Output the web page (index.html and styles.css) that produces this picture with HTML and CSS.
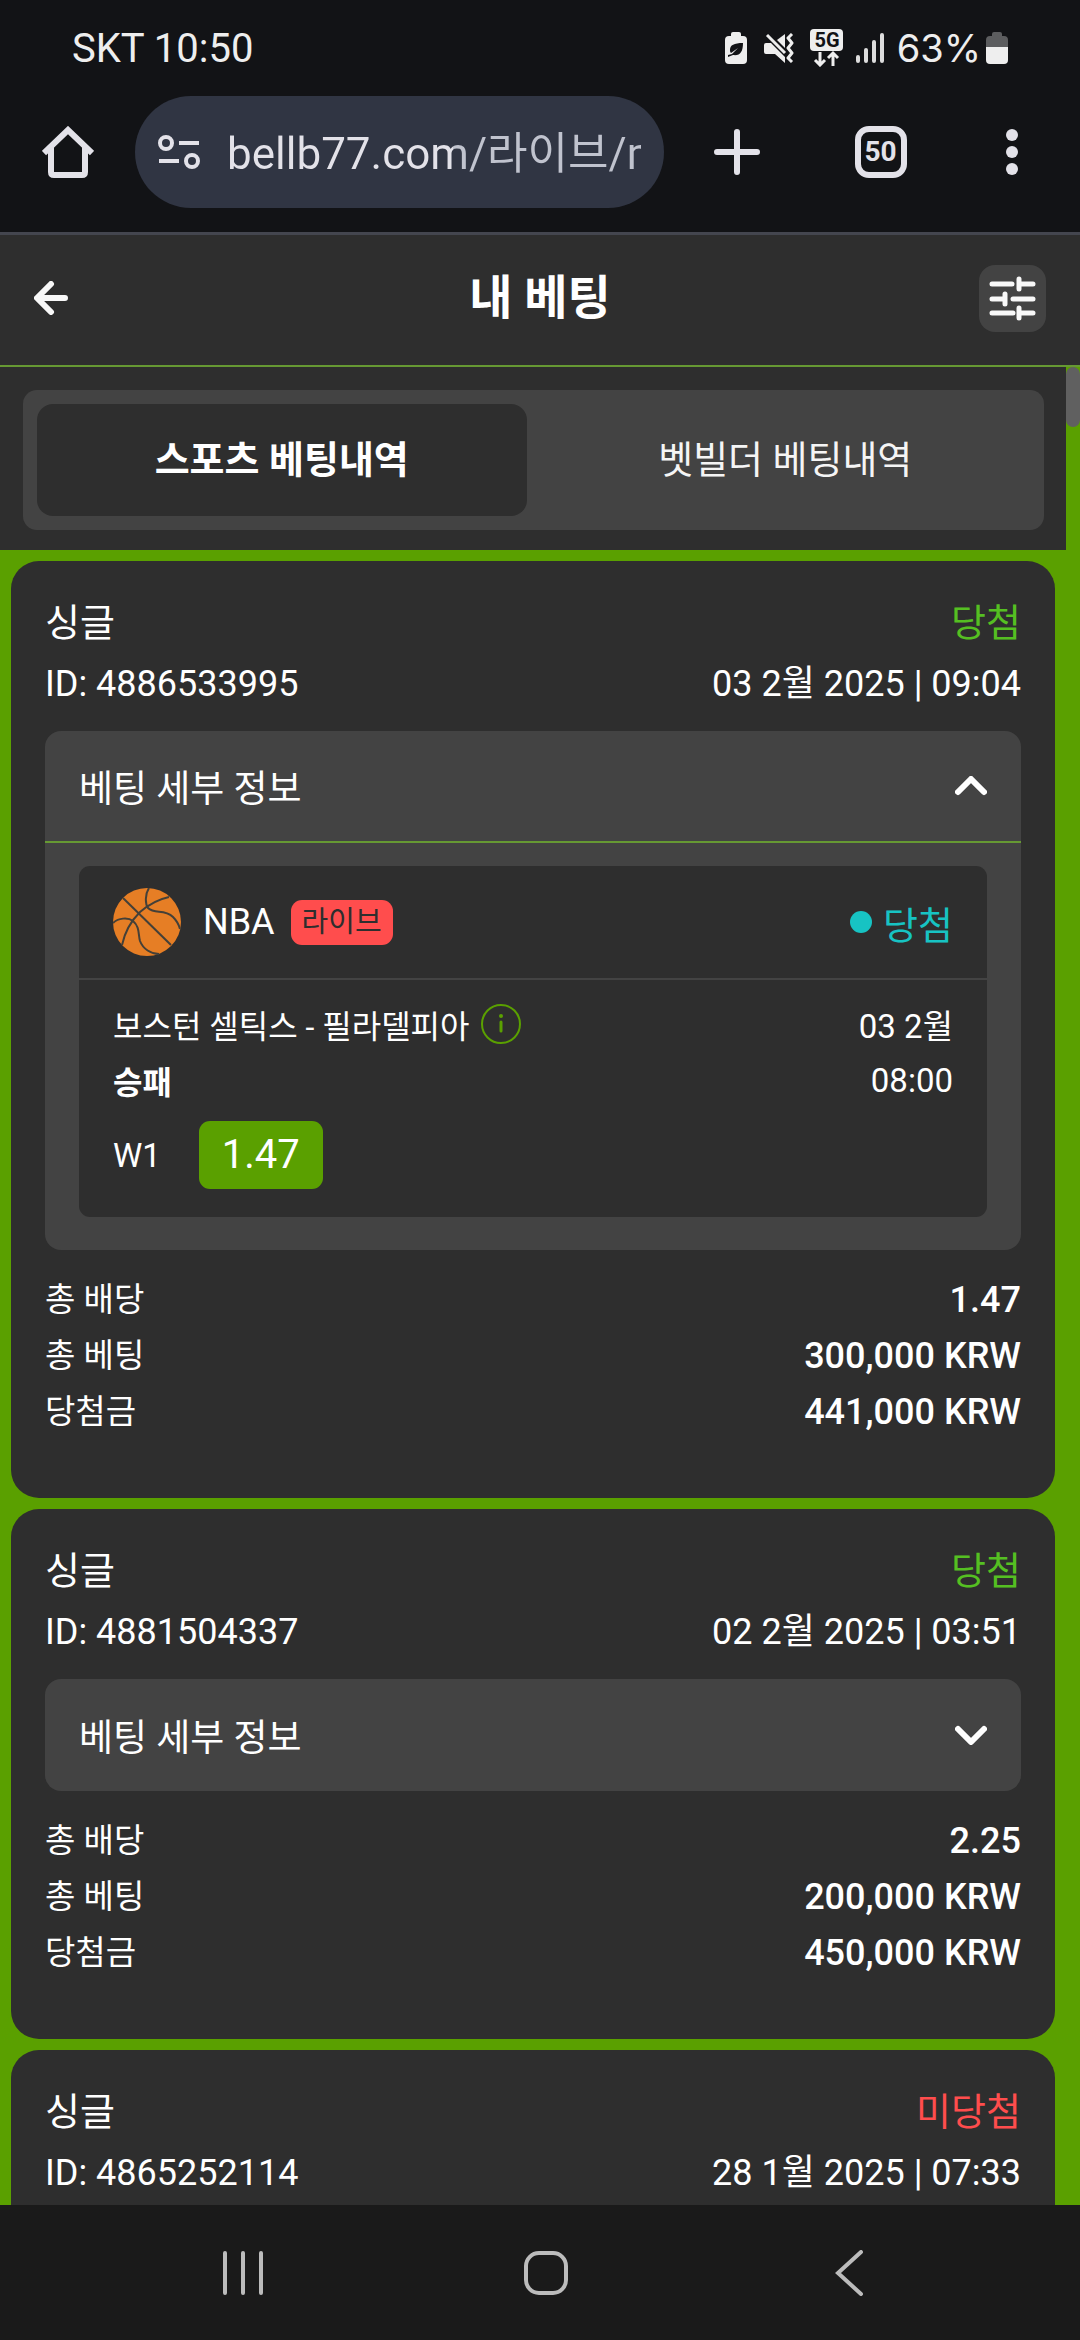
FILE: index.html
```html
<!DOCTYPE html>
<html lang="ko">
<head>
    <meta charset="UTF-8">
    <meta name="viewport" content="width=device-width, initial-scale=1.0">
    <title>내 베팅</title>
    <link rel="stylesheet" href="styles.css">
</head>
<body>
    <!-- Status bar -->
    <div class="status-bar">
        <span>SKT 10:50</span>
        <div class="status-icons">
            <svg width="22" height="32" viewBox="0 0 22 32">
                <rect x="6" y="0" width="10" height="8" rx="2" fill="#eee"/>
                <rect x="0" y="4" width="22" height="28" rx="4" fill="#eee"/>
                <path d="M18 11C9 11 5 13 5 18c0 1 0 2 1 3l7-5-6 6-4 1v2l5-2c7 1 10-3 10-12z" fill="#121316"/>
            </svg>
            <svg class="mute-icon" width="30" height="30" viewBox="0 0 30 30">
                <path d="M0 12q0-2 2-2h5l14 14v6l-10-9H2q-2 0-2-2z" fill="#eee"/>
                <path d="M13 7l8-6v14z" fill="#eee"/>
                <path d="M3 2l18 18" stroke="#eee" stroke-width="3"/>
                <path d="M28 1l-4 4 4 5-4 5 4 5-4 5 4 4" fill="none" stroke="#eee" stroke-width="3" stroke-linejoin="round"/>
            </svg>
            <svg class="network-icon" width="33" height="38" viewBox="0 0 33 38">
                <rect width="33" height="22" rx="4" fill="#eee"/>
                <text x="17" y="18" text-anchor="middle" class="network-label">5G</text>
                <path d="M10 23v12M5 31l5 5 5-5M23 37V25M18 29l5-5 5 5" fill="none" stroke="#eee" stroke-width="3"/>
            </svg>
            <svg class="signal-icon" width="28" height="30" viewBox="0 0 28 30">
                <path d="M2 24v4M10 17v11M18 9v19M26 2v26" stroke="#ddd" stroke-width="4" stroke-linecap="round"/>
            </svg>
            <span class="battery-level">63%</span>
            <svg width="22" height="32" viewBox="0 0 22 32">
                <path d="M6 2q0-2 2-2h6q2 0 2 2v2h2q4 0 4 4v8H0V8q0-4 4-4h2z" fill="#5c5d5f"/>
                <path d="M0 15h22v13q0 4-4 4H4q-4 0-4-4z" fill="#eee"/>
            </svg>
        </div>
    </div>

    <!-- Browser toolbar -->
    <div class="toolbar">
        <button class="icon-btn" aria-label="홈">
            <svg width="52" height="52" viewBox="0 0 52 52" fill="none" stroke="#e3e2e9" stroke-width="6">
                <path d="M2 27L26 4l24 23"/>
                <path d="M9 21v25q0 3 3 3h28q3 0 3-3V21"/>
            </svg>
        </button>
        <div class="address-bar">
            <svg width="42" height="36" viewBox="0 0 42 36" fill="none" stroke="#e3e2e9" stroke-width="4">
                <circle cx="8" cy="9" r="6"/>
                <path d="M21 9h20M1 27h20"/>
                <circle cx="34" cy="27" r="6"/>
            </svg>
            <input class="address-input" type="text" value="bellb77.com/라이브/my-bets" aria-label="주소">
        </div>
        <div class="toolbar-actions">
            <button class="icon-btn" aria-label="새 탭">
                <svg width="46" height="46" viewBox="0 0 46 46" stroke="#e3e2e9" stroke-width="6" stroke-linecap="round">
                    <path d="M23 3v40M3 23h40"/>
                </svg>
            </button>
            <button class="tab-count" aria-label="탭">50</button>
            <button class="icon-btn" aria-label="메뉴">
                <svg width="22" height="46" viewBox="0 0 22 46" fill="#e3e2e9">
                    <circle cx="11" cy="6" r="6"/>
                    <circle cx="11" cy="23" r="6"/>
                    <circle cx="11" cy="40" r="6"/>
                </svg>
            </button>
        </div>
    </div>

    <!-- Page header -->
    <header class="page-header">
        <button class="icon-btn" aria-label="뒤로">
            <svg width="34" height="34" viewBox="0 0 34 34" fill="none" stroke="#f8f8f8" stroke-width="6" stroke-linecap="round" stroke-linejoin="round">
                <path d="M31 17H4M17 3L3 17l14 14"/>
            </svg>
        </button>
        <h1>내 베팅</h1>
        <button class="filter-btn" aria-label="필터">
            <svg width="67" height="67" viewBox="0 0 67 67" fill="none" stroke="#f8f8f8" stroke-width="5" stroke-linecap="round">
                <path d="M13 19h20M40 19h14M40 14v10"/>
                <path d="M13 34h13M34 34h20M26 29v10"/>
                <path d="M13 48h21M40 48h14M40 43v10"/>
            </svg>
        </button>
    </header>

    <main class="content">
        <div class="feed">
            <div class="tabs-wrap">
                <div class="tabs">
                    <button class="tab tab-active">스포츠 베팅내역</button>
                    <button class="tab">벳빌더 베팅내역</button>
                </div>
            </div>

            <div class="bets">
                <article class="bet">
                    <div class="bet-top">
                        <span>싱글</span>
                        <span class="won">당첨</span>
                    </div>
                    <div class="bet-meta">
                        <span>ID: 4886533995</span>
                        <span>03 2월 2025 | 09:04</span>
                    </div>
                    <details class="details" open>
                        <summary>
                            베팅 세부 정보
                            <svg class="chevron" width="32" height="20" viewBox="0 0 32 20"><path d="M3 4l13 13L29 4"/></svg>
                        </summary>
                        <div class="event">
                            <div class="event-head">
                                <svg width="68" height="68" viewBox="0 0 68 68">
                                    <circle cx="34" cy="34" r="34" fill="#e67e25"/>
                                    <g fill="none" stroke="#444038" stroke-width="2">
                                        <path d="M10 10L58 57"/>
                                        <path d="M56 9C42 12 34 18 27 24 18 33 12 43 9 57"/>
                                        <path d="M36 0C32 6 32 16 35 20 42 27 51 20 60 29c4 4 6 8 7 12"/>
                                        <path d="M0 35C5 30 15 29 20 33 27 39 25 46 27 53c3 8 11 13 19 13"/>
                                    </g>
                                </svg>
                                <span class="league">NBA</span>
                                <span class="live">라이브</span>
                                <span class="event-result">당첨</span>
                            </div>
                            <div class="event-body">
                                <div class="event-row">
                                    <span class="teams">
                                        보스턴 셀틱스 - 필라델피아
                                        <svg width="42" height="42" viewBox="0 0 42 42" fill="none" stroke="#5aa000">
                                            <circle cx="21" cy="21" r="19" stroke-width="2"/>
                                            <path d="M21 19v9" stroke-width="3" stroke-linecap="round"/>
                                            <circle cx="21" cy="13" r="2" fill="#5aa000" stroke="none"/>
                                        </svg>
                                    </span>
                                    <span class="event-date">03 2월</span>
                                </div>
                                <div class="event-row">
                                    <strong>승패</strong>
                                    <span class="event-date">08:00</span>
                                </div>
                                <div class="pick">
                                    <span>W1</span>
                                    <span class="odds">1.47</span>
                                </div>
                            </div>
                        </div>
                    </details>
                    <dl class="totals">
                        <div><dt>총 배당</dt><dd>1.47</dd></div>
                        <div><dt>총 베팅</dt><dd>300,000 KRW</dd></div>
                        <div><dt>당첨금</dt><dd>441,000 KRW</dd></div>
                    </dl>
                </article>

                <article class="bet">
                    <div class="bet-top">
                        <span>싱글</span>
                        <span class="won">당첨</span>
                    </div>
                    <div class="bet-meta">
                        <span>ID: 4881504337</span>
                        <span>02 2월 2025 | 03:51</span>
                    </div>
                    <details class="details">
                        <summary>
                            베팅 세부 정보
                            <svg class="chevron" width="32" height="20" viewBox="0 0 32 20"><path d="M3 4l13 13L29 4"/></svg>
                        </summary>
                    </details>
                    <dl class="totals">
                        <div><dt>총 배당</dt><dd>2.25</dd></div>
                        <div><dt>총 베팅</dt><dd>200,000 KRW</dd></div>
                        <div><dt>당첨금</dt><dd>450,000 KRW</dd></div>
                    </dl>
                </article>

                <article class="bet">
                    <div class="bet-top">
                        <span>싱글</span>
                        <span class="lost">미당첨</span>
                    </div>
                    <div class="bet-meta">
                        <span>ID: 4865252114</span>
                        <span>28 1월 2025 | 07:33</span>
                    </div>
                </article>
            </div>
        </div>
        <div class="scroll-track">
            <div class="scroll-thumb"></div>
        </div>
    </main>

    <!-- System navigation -->
    <nav class="nav-bar">
        <button class="icon-btn" aria-label="최근 앱">
            <svg width="46" height="46" viewBox="0 0 46 46" stroke="#bcbcbc" stroke-width="4" stroke-linecap="round">
                <path d="M5 3v40M23 3v40M41 3v40"/>
            </svg>
        </button>
        <button class="icon-btn" aria-label="홈 화면">
            <svg width="46" height="46" viewBox="0 0 46 46" fill="none" stroke="#bcbcbc" stroke-width="4">
                <rect x="3" y="3" width="40" height="40" rx="13"/>
            </svg>
        </button>
        <button class="icon-btn" aria-label="이전">
            <svg width="46" height="46" viewBox="0 0 46 46" fill="none" stroke="#bcbcbc" stroke-width="4" stroke-linecap="round">
                <path d="M35 2L12 23l23 21"/>
            </svg>
        </button>
    </nav>
</body>
</html>
```

FILE: styles.css
```css
* {
    margin: 0;
    padding: 0;
    box-sizing: border-box;
}

body {
    font-family: Roboto, 'Noto Sans CJK KR', sans-serif;
    background: #121316;
    color: #fff;
    height: 100vh;
    display: flex;
    flex-direction: column;
    overflow: hidden;
}

button,
input {
    font: inherit;
    color: inherit;
    border: none;
    background: none;
    cursor: pointer;
}

svg {
    display: block;
    flex: none;
}

.icon-btn {
    display: flex;
    align-items: center;
    justify-content: center;
}

/* Status bar */
.status-bar {
    flex: none;
    display: flex;
    align-items: center;
    justify-content: space-between;
    height: 96px;
    padding: 0 72px;
    font-size: 40px;
    color: #eee;
}

.status-icons {
    display: flex;
    align-items: center;
}

.mute-icon {
    margin-left: 17px;
}

.network-icon {
    margin-left: 16px;
}

.network-label {
    font-size: 20px;
    font-weight: 700;
    fill: #121316;
}

.signal-icon {
    margin-left: 13px;
}

.battery-level {
    margin: 0 5px 0 13px;
    font-family: Inter, sans-serif;
    font-size: 38px;
}

/* Browser toolbar */
.toolbar {
    flex: none;
    display: flex;
    align-items: center;
    height: 139px;
    padding: 0 57px 24px 42px;
    border-bottom: 3px solid #44464f;
}

.address-bar {
    flex: 1;
    min-width: 0;
    display: flex;
    align-items: center;
    gap: 27px;
    height: 112px;
    margin-left: 41px;
    padding: 0 23px;
    border-radius: 56px;
    background: #303543;
}

.address-input {
    flex: 1;
    min-width: 0;
    height: 80px;
    padding-bottom: 4px;
    font-size: 44px;
    background: linear-gradient(90deg, #e3e2e9 226px, #c0c3ce 226px);
    -webkit-background-clip: text;
    background-clip: text;
    color: transparent;
    outline: none;
}

.toolbar-actions {
    flex: none;
    display: flex;
    align-items: center;
    justify-content: space-between;
    width: 309px;
    margin-left: 50px;
}

.tab-count {
    width: 52px;
    height: 52px;
    border: 6px solid #e3e2e9;
    border-radius: 14px;
    font-size: 28px;
    font-weight: 700;
    line-height: 40px;
    text-align: center;
    color: #e3e2e9;
}

/* Page header */
.page-header {
    flex: none;
    display: flex;
    align-items: center;
    justify-content: space-between;
    height: 132px;
    padding: 0 34px 4px;
    background: #2e2e2e;
    border-bottom: 2px solid #669933;
}

.page-header .icon-btn {
    width: 67px;
    justify-content: flex-start;
}

.page-header h1 {
    font-size: 47px;
    font-weight: 700;
    line-height: 66px;
}

.filter-btn {
    width: 67px;
    height: 67px;
    border-radius: 16px;
    background: #434343;
}

/* Content */
.content {
    flex: 1;
    min-height: 0;
    display: flex;
    overflow: hidden;
    background: #5aa000;
}

.feed {
    flex: 1;
    min-width: 0;
}

.scroll-track {
    flex: none;
    width: 14px;
}

.scroll-thumb {
    height: 60px;
    border-radius: 7px;
    background: #606060;
}

.tabs-wrap {
    padding: 23px 22px 20px 23px;
    background: #2e2e2e;
}

.tabs {
    display: flex;
    gap: 14px;
    padding: 14px;
    border-radius: 14px;
    background: #434343;
}

.tab {
    flex: 1;
    height: 112px;
    padding-bottom: 8px;
    border-radius: 16px;
    font-size: 38px;
    color: #f5f5f5;
}

.tab-active {
    background: #2e2e2e;
    font-weight: 700;
    color: #fff;
}

/* Bet cards */
.bets {
    display: flex;
    flex-direction: column;
    gap: 11px;
    padding: 11px;
}

.bet {
    padding: 35px 34px 58px;
    border-radius: 28px;
    background: #2e2e2e;
}

.bet-top,
.bet-meta {
    display: flex;
    justify-content: space-between;
}

.bet-top {
    font-size: 38px;
    line-height: 54px;
}

.bet-meta {
    margin: 12px 0 24px;
    font-size: 36px;
    line-height: 45px;
}

.won {
    color: #55bf22;
}

.lost {
    color: #ff4d4d;
}

.details {
    border-radius: 16px;
    background: #434343;
}

.details summary {
    display: flex;
    align-items: center;
    justify-content: space-between;
    height: 112px;
    padding: 0 34px;
    font-size: 37px;
    list-style: none;
    cursor: pointer;
}

.details[open] {
    padding-bottom: 33px;
}

.details[open] summary {
    border-bottom: 2px solid #669933;
}

.chevron {
    fill: none;
    stroke: #fff;
    stroke-width: 6;
    stroke-linecap: round;
    stroke-linejoin: round;
}

.details[open] .chevron {
    transform: rotate(180deg);
}

.event {
    margin: 23px 34px 0;
    border-radius: 11px;
    background: #2e2e2e;
}

.event-head {
    display: flex;
    align-items: center;
    height: 114px;
    padding: 0 34px;
    border-bottom: 2px solid #434343;
}

.league {
    margin: 0 16px 0 22px;
    font-size: 36px;
}

.live {
    height: 45px;
    padding: 0 11px;
    border-radius: 11px;
    background: #ff4d4d;
    color: #2e2e2e;
    font-size: 29px;
    line-height: 44px;
}

.event-result {
    display: flex;
    align-items: center;
    gap: 11px;
    margin-left: auto;
    font-size: 38px;
    color: #17c3c3;
}

.event-result::before {
    content: '';
    width: 22px;
    height: 22px;
    border-radius: 50%;
    background: #17c3c3;
}

.event-body {
    padding: 16px 34px 28px;
    font-size: 32px;
}

.event-row {
    display: flex;
    align-items: center;
    justify-content: space-between;
    height: 56px;
}

.event-date {
    font-size: 33px;
}

.teams {
    display: flex;
    align-items: center;
    gap: 10px;
}

.pick {
    display: flex;
    align-items: center;
    gap: 38px;
    margin-top: 13px;
    font-size: 33px;
}

.odds {
    padding: 0 23px;
    border-radius: 11px;
    background: #5aa000;
    font-size: 40px;
    line-height: 68px;
}

.totals {
    margin-top: 22px;
    font-size: 33px;
    line-height: 56px;
}

.totals div {
    display: flex;
    justify-content: space-between;
}

.totals dd {
    font-size: 36px;
    font-weight: 500;
}

/* System navigation */
.nav-bar {
    flex: none;
    display: flex;
    align-items: center;
    justify-content: space-between;
    height: 135px;
    padding: 0 208px 0 220px;
    background: #1a1a1a;
}
```
